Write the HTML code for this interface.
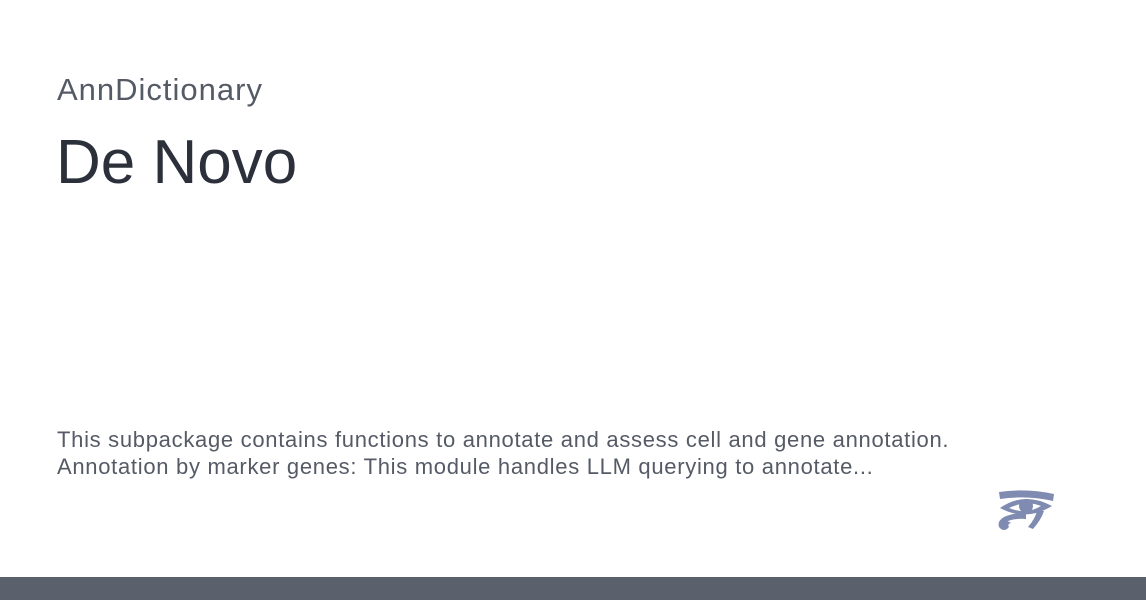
<!DOCTYPE html>
<html><head><meta charset="utf-8"><style>
html,body{margin:0;padding:0;width:1146px;height:600px;overflow:hidden;background:#fff;font-family:"Liberation Sans",sans-serif;}
.t1{position:absolute;left:57px;top:72px;font-size:31px;letter-spacing:1px;color:#555b66;}
.t2{position:absolute;left:56px;top:127px;font-size:62px;letter-spacing:0px;color:#2b303a;}
.d{position:absolute;left:57px;top:426px;font-size:22px;letter-spacing:0.7px;line-height:27px;color:#555b66;white-space:nowrap;}
.bar{position:absolute;left:0;top:577px;width:1146px;height:23px;background:#5a616c;}
svg{position:absolute;left:996px;top:489px;}
</style></head><body>
<div class="t1">AnnDictionary</div>
<div class="t2">De Novo</div>
<div class="d">This subpackage contains functions to annotate and assess cell and gene annotation.<br>Annotation by marker genes: This module handles LLM querying to annotate...</div>
<svg width="60" height="44" viewBox="0 0 60 44" fill="#7f8bb1">
<path d="M3 3 Q30 -1 58 5 L57 12 Q30 6 4 10 Z"/>
<path d="M4 19 Q28 2 56 17 Q30 33 4 19 Z M13 19 Q30 26 45 17 Q30 11 13 19Z"/>
<circle cx="30" cy="17" r="7"/>
<path d="M30 24 Q16 24 8 28 Q1 32 3 38 Q8 44 13 38 Q11 35 15 34 Q11 31 10 33 Q18 29 30 30 Z"/>
<path d="M41 22 L48 22 Q45 31 37 40 L32 38 Q39 30 41 22Z"/>
</svg>
<div class="bar"></div>
</body></html>
